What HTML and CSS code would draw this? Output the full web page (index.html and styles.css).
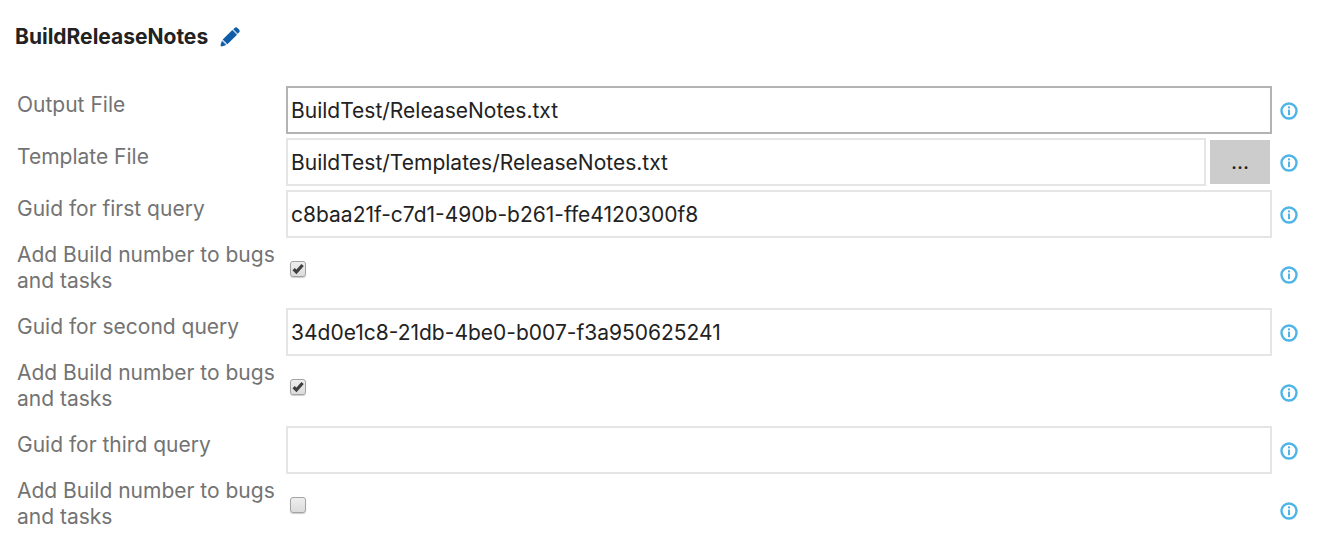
FILE: index.html
```
<!DOCTYPE html>
<html lang="en">
<head>
<meta charset="utf-8">
<title>BuildReleaseNotes</title>
<link rel="stylesheet" href="styles.css">
</head>
<body>
<svg class="defs" aria-hidden="true">
  <symbol id="info" viewBox="0 0 18 18">
    <circle cx="9" cy="9" r="7.5" fill="none" stroke="#4fb4e6" stroke-width="2.4"/>
    <rect x="8" y="4.4" width="2" height="2" fill="#4fb4e6"/>
    <rect x="8" y="7.6" width="2" height="5.6" fill="#4fb4e6"/>
  </symbol>
</svg>
<main class="task">
  <header class="task-header">
    <h1 class="task-title">BuildReleaseNotes</h1>
    <button class="icon-button" type="button" aria-label="Rename">
      <svg class="pencil" viewBox="0 0 20 20" fill="#0f5ca8">
        <path d="M12.3 3 17 7.7 7.4 17.3 2.7 12.6Z"/>
        <path d="M1.9 13.8 6.2 18.1 2.5 19.3Q.1 19.9.7 17.5Z"/>
        <path d="M13.3 2.3 14.6 1Q16-.4 17.5 1L19 2.5Q20.4 4.1 19 5.4L17.7 6.7Z"/>
        <path d="M12.7 2.6 17.4 7.3M2.3 13.2 6.8 17.7" stroke="#a9c7e3" stroke-width=".9"/>
      </svg>
    </button>
  </header>
  <form class="fields">
    <div class="row">
      <label class="label" for="output">Output File</label>
      <div class="control"><input class="text active" id="output" type="text" value="BuildTest/ReleaseNotes.txt"></div>
      <button class="icon-button help" type="button" aria-label="Info"><svg class="info"><use href="#info"/></svg></button>
    </div>
    <div class="row">
      <label class="label" for="template">Template File</label>
      <div class="control"><input class="text" id="template" type="text" value="BuildTest/Templates/ReleaseNotes.txt"><button class="browse" type="button">...</button></div>
      <button class="icon-button help" type="button" aria-label="Info"><svg class="info"><use href="#info"/></svg></button>
    </div>
    <div class="row">
      <label class="label" for="query1">Guid for first query</label>
      <div class="control"><input class="text" id="query1" type="text" value="c8baa21f-c7d1-490b-b261-ffe4120300f8"></div>
      <button class="icon-button help" type="button" aria-label="Info"><svg class="info"><use href="#info"/></svg></button>
    </div>
    <div class="row row-check">
      <label class="label" for="add1">Add Build number to bugs and tasks</label>
      <div class="control"><input class="check" id="add1" type="checkbox" checked></div>
      <button class="icon-button help" type="button" aria-label="Info"><svg class="info"><use href="#info"/></svg></button>
    </div>
    <div class="row">
      <label class="label" for="query2">Guid for second query</label>
      <div class="control"><input class="text" id="query2" type="text" value="34d0e1c8-21db-4be0-b007-f3a950625241"></div>
      <button class="icon-button help" type="button" aria-label="Info"><svg class="info"><use href="#info"/></svg></button>
    </div>
    <div class="row row-check">
      <label class="label" for="add2">Add Build number to bugs and tasks</label>
      <div class="control"><input class="check" id="add2" type="checkbox" checked></div>
      <button class="icon-button help" type="button" aria-label="Info"><svg class="info"><use href="#info"/></svg></button>
    </div>
    <div class="row">
      <label class="label" for="query3">Guid for third query</label>
      <div class="control"><input class="text" id="query3" type="text"></div>
      <button class="icon-button help" type="button" aria-label="Info"><svg class="info"><use href="#info"/></svg></button>
    </div>
    <div class="row row-check">
      <label class="label" for="add3">Add Build number to bugs and tasks</label>
      <div class="control"><input class="check" id="add3" type="checkbox"></div>
      <button class="icon-button help" type="button" aria-label="Info"><svg class="info"><use href="#info"/></svg></button>
    </div>
  </form>
</main>
</body>
</html>
```
FILE: styles.css
```
* {
  box-sizing: border-box;
}

body {
  margin: 0;
  background: #fff;
  color: #222;
  font: 21px/26px Inter, Roboto, sans-serif;
}

.defs {
  display: block;
  width: 0;
  height: 0;
}

.task {
  padding: 24px 36px 10px 15px;
}

.task-header {
  display: flex;
  align-items: center;
  gap: 12px;
  margin-bottom: 34px;
}

.task-title {
  margin: 0;
  font-size: 21px;
  font-weight: 700;
}

.icon-button {
  display: block;
  padding: 0;
  border: 0;
  background: none;
}

.pencil {
  display: block;
  width: 20px;
  height: 20px;
}

.help {
  padding-top: 2px;
}

.info {
  display: block;
  width: 18px;
  height: 18px;
}

.row {
  display: grid;
  grid-template-columns: 261px minmax(0, 1fr) 18px;
  column-gap: 8px;
  align-items: center;
  min-height: 52px;
  padding-left: 2px;
}

.row-check {
  min-height: 66px;
}

.label {
  align-self: start;
  padding-top: 8px;
  color: #737373;
}

.control {
  display: flex;
  align-items: center;
  gap: 4px;
}

.text {
  flex: 1;
  min-width: 0;
  height: 48px;
  padding: 0 3px;
  border: 2px solid #e5e5e5;
  background: #fff;
  color: inherit;
  font: inherit;
}

.active {
  border-color: #b3b3b3;
}

.browse {
  width: 60px;
  height: 44px;
  margin-right: 2px;
  border: 0;
  background: #ccc;
  color: inherit;
  font: inherit;
}

.row-check .label {
  padding-top: 2px;
}

.row-check .control {
  align-self: start;
  padding: 21px 4px 0;
}

.row-check .help {
  padding-top: 4px;
}

.check {
  appearance: none;
  width: 16px;
  height: 16px;
  margin: 0;
  border: 1px solid #a3a3a3;
  border-radius: 3px;
  background: linear-gradient(#eee, #dcdcdc);
  box-shadow: 0 1px 1px #ccc;
}

.check:checked {
  background:
    url("data:image/svg+xml,%3Csvg xmlns='http://www.w3.org/2000/svg' viewBox='0 0 14 14'%3E%3Cpath d='M2.6 7.2 5.4 10 11.6 3' fill='none' stroke='%23404040' stroke-width='3.2'/%3E%3C/svg%3E") center / 14px no-repeat,
    linear-gradient(#eee, #dcdcdc);
}
```
